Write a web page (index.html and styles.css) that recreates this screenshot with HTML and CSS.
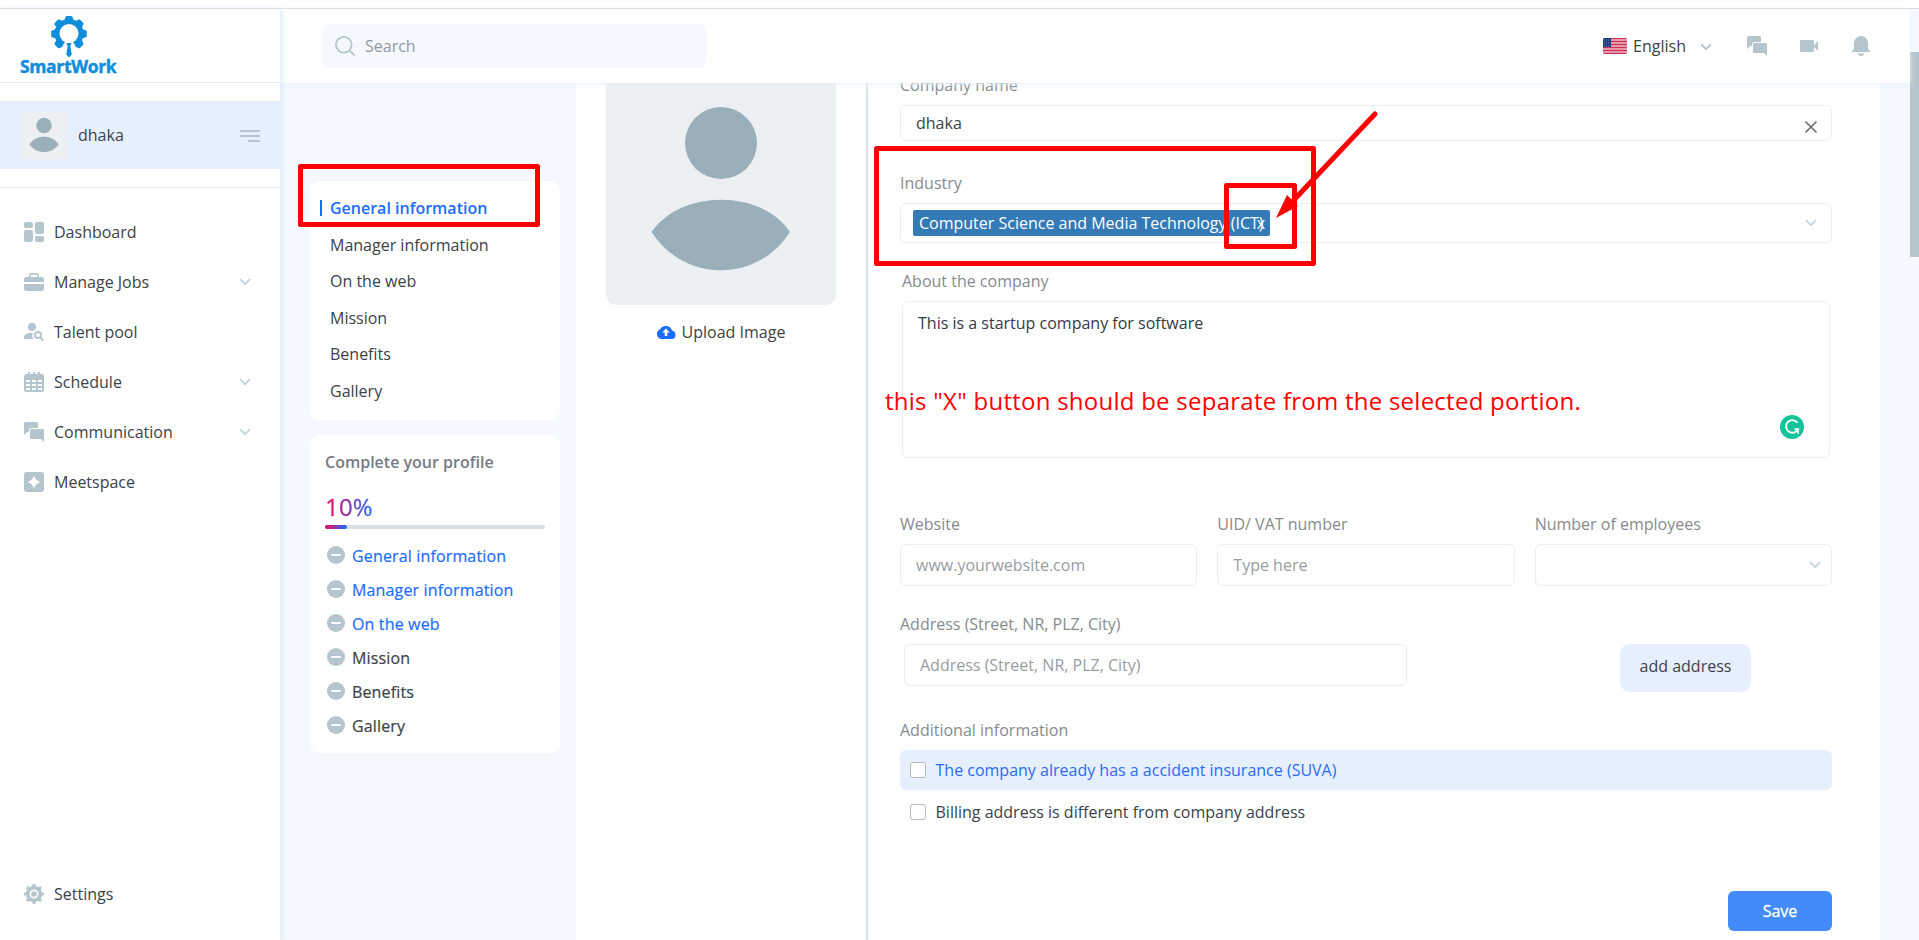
FILE: index.html
```html
<!DOCTYPE html>
<html lang="en">
<head>
<meta charset="utf-8">
<title>SmartWork</title>
<link rel="stylesheet" href="styles.css">
</head>
<body>
<svg class="defs" width="0" height="0">
  <symbol id="chev" viewBox="0 0 12 8"><path d="M1 1.2 6 6.2 11 1.2" fill="none" stroke="currentColor" stroke-width="1.9"/></symbol>
  <symbol id="chat" viewBox="0 0 20 20"><path d="M1.500 0h11A1.500 1.500 0 0 1 14 1.500V6H7.500A2.500 2.500 0 0 0 5 8.500V10H3L0 13V1.500A1.500 1.500 0 0 1 1.500 0z"/><path d="M7.500 7h11A1.500 1.500 0 0 1 20 8.500V20l-3-3H7.500A1.500 1.500 0 0 1 6 15.500v-7A1.500 1.500 0 0 1 7.500 7z"/></symbol>
  <symbol id="minus" viewBox="0 0 18 18"><circle cx="9" cy="9" r="9"/><path d="M5 9h8" stroke="#fff" stroke-width="2" stroke-linecap="round"/></symbol>
  <symbol id="person" viewBox="0 0 230 230"><circle cx="115" cy="68" r="36"/><path d="M45.500 157C75 114 155 114 184 157C152 208 78 208 45.500 157z"/></symbol>
</svg>
<div class="strip"></div>
<div class="app">
  <aside class="sidebar">
    <div class="brand">
      <svg class="gear" width="36" height="42" viewBox="0 0 36 42"><g fill="#108ddb"><circle cx="18" cy="17.500" r="14.500"/><path id="tooth" d="M13 5.500 14.600.8Q15 0 15.800 0h4.400Q21 0 21.400.8L23 5.500z"/><use href="#tooth" transform="rotate(45 18 17.800)"/><use href="#tooth" transform="rotate(90 18 17.800)"/><use href="#tooth" transform="rotate(135 18 17.800)"/><use href="#tooth" transform="rotate(225 18 17.800)"/><use href="#tooth" transform="rotate(270 18 17.800)"/><use href="#tooth" transform="rotate(315 18 17.800)"/></g><circle cx="18" cy="17.500" r="9.500" fill="#fff"/><path d="M14 26h8l1.500 2 2 6h-15l2-6z" fill="#fff"/><path d="M15.500 27h5l-1.200 3 1.400 8.500L18 41.500l-2.700-3L16.700 30z" fill="#108ddb"/></svg>
      <div class="brand-name">SmartWork</div>
    </div>
    <div class="user">
      <svg class="avatar" width="48" height="48" viewBox="0 0 48 48"><circle cx="24" cy="14.500" r="7.700"/><path d="M9.500 33.500C15 23 33 23 38.500 33.500C32 43.500 16 43.500 9.500 33.500z"/></svg>
      <span class="user-name">dhaka</span>
      <svg class="burger" width="20" height="12" viewBox="0 0 20 12"><path d="M0 1h20M0 6h20M8 11h12" stroke="#b4c5ce" stroke-width="2"/></svg>
    </div>
    <nav class="nav">
      <a class="nav-item"><svg width="20" height="20"><rect width="9" height="6" rx="2"/><rect y="8" width="9" height="12" rx="2"/><rect x="11" width="9" height="12" rx="2"/><rect x="11" y="14" width="9" height="6" rx="2"/></svg>Dashboard</a>
      <a class="nav-item"><svg width="20" height="20"><path fill-rule="evenodd" d="M5 5V3a2 2 0 0 1 2-2h6a2 2 0 0 1 2 2v2h3a2 2 0 0 1 2 2v3H0V7a2 2 0 0 1 2-2zM6.500 5h7V2.700h-7zM0 12h20v5a2 2 0 0 1-2 2H2a2 2 0 0 1-2-2z"/></svg>Manage Jobs<svg class="arrow" width="12" height="8"><use href="#chev"/></svg></a>
      <a class="nav-item"><svg width="20" height="20"><circle cx="8" cy="5" r="4"/><path d="M0 17v-2c0-3 4-4.200 9-4-1 2-1 4 .5 6z"/><circle cx="14" cy="13" r="3" fill="none" stroke="#b4c5ce" stroke-width="2"/><path d="m16 15.200 3.300 3.300" stroke="#b4c5ce" stroke-width="2"/></svg>Talent pool</a>
      <a class="nav-item"><svg width="20" height="20"><rect y="2" width="20" height="18" rx="2.500"/><path d="M5 0v4M10 0v4M15 0v4" stroke="#b4c5ce" stroke-width="2"/><path d="M2 9h4M8 9h4M14 9h4M2 13h4M8 13h4M14 13h4M2 17h4M8 17h4M14 17h4" stroke="#fff" stroke-width="2"/></svg>Schedule<svg class="arrow" width="12" height="8"><use href="#chev"/></svg></a>
      <a class="nav-item"><svg width="20" height="20"><use href="#chat"/></svg>Communication<svg class="arrow" width="12" height="8"><use href="#chev"/></svg></a>
      <a class="nav-item"><svg width="20" height="20"><rect width="20" height="20" rx="3"/><path d="M10 3.500Q11.500 8.500 16.500 10 11.500 11.500 10 16.500 8.500 11.500 3.500 10 8.500 8.500 10 3.500z" fill="#fff"/></svg>Meetspace</a>
    </nav>
    <a class="nav-item settings"><svg width="20" height="20" viewBox="0 0 20 20"><circle cx="10" cy="10" r="6.300" fill="none" stroke="#b4c5ce" stroke-width="3.600"/><path d="M10 0v3M10 17v3M0 10h3M17 10h3M3 3l2 2M15 15l2 2M17 3l-2 2M3 17l2-2" stroke="#b4c5ce" stroke-width="3"/><circle cx="10" cy="10" r="2.800"/></svg>Settings</a>
  </aside>

  <div class="main">
    <header class="topbar">
      <div class="search"><svg width="20" height="20" fill="none" stroke="#b4c5ce" stroke-width="1.800"><circle cx="8.800" cy="8.800" r="7.900"/><path d="m14.200 14.200 5.300 5.300"/></svg>Search</div>
      <div class="lang">
        <svg width="24" height="16"><defs><clipPath id="fl"><rect width="24" height="16" rx="2"/></clipPath></defs><g clip-path="url(#fl)"><rect width="24" height="16" fill="#e58a9c"/><path d="M0 .5h24M0 3.500h24M0 6.500h24M0 9.500h24M0 12.500h24M0 15.500h24" stroke="#c9305a"/><path d="M0 2h24M0 5h24M0 8h24M0 11h24M0 14h24" stroke="#eda5b2"/><rect width="8" height="9" fill="#1d3f7c"/><path d="M1 2h6M1 5h6M1 8h6" stroke="#6480ae" stroke-dasharray="1 1"/></g></svg>
        <span>English</span>
        <svg class="lang-chev" width="12" height="8"><use href="#chev"/></svg>
      </div>
      <div class="tools">
        <svg width="20" height="20"><use href="#chat"/></svg>
        <svg width="18" height="12"><rect width="14" height="12" rx="1.200"/><path d="M13.500 6 18 1v10z"/></svg>
        <svg class="bell" width="18" height="20"><path d="M9 0a7 7 0 0 1 7 7v6l2 2v1H0v-1l2-2V7a7 7 0 0 1 7-7zM5.500 17.500h7c-.5 1.500-2 2.500-3.500 2.500s-3-1-3.500-2.500z"/></svg>
      </div>
    </header>

    <div class="content">
      <div class="rail">
        <div class="card menu">
          <a class="active">General information</a><a>Manager information</a><a>On the web</a><a>Mission</a><a>Benefits</a><a>Gallery</a>
        </div>
        <div class="card progress">
          <div class="progress-title">Complete your profile</div>
          <div class="percent">10%</div>
          <div class="bar"><div class="fill" style="width:10%"></div></div>
          <a class="step todo"><svg width="18" height="18"><use href="#minus"/></svg>General information</a>
          <a class="step todo"><svg width="18" height="18"><use href="#minus"/></svg>Manager information</a>
          <a class="step todo"><svg width="18" height="18"><use href="#minus"/></svg>On the web</a>
          <a class="step"><svg width="18" height="18"><use href="#minus"/></svg>Mission</a>
          <a class="step"><svg width="18" height="18"><use href="#minus"/></svg>Benefits</a>
          <a class="step"><svg width="18" height="18"><use href="#minus"/></svg>Gallery</a>
        </div>
      </div>
      <div class="panel">
        <div class="photo-col">
          <div class="photo"><svg width="230" height="230"><use href="#person"/></svg></div>
          <div class="upload"><svg width="20" height="14"><path d="M5 14a5 5 0 0 1-1-9.500 6.500 6.500 0 0 1 12 1A4.300 4.300 0 0 1 15.700 14z" fill="#1a6dff"/><path d="M10 3.500 13.800 7.500H11.300V11H8.700V7.500H6.200z" fill="#fff"/></svg>Upload Image</div>
        </div>
        <div class="form">
          <label class="lbl">Company name</label>
          <div class="field name"><span>dhaka</span><svg width="12" height="12"><path d="m.5.5 11 11m0-11-11 11" stroke="#777" stroke-width="1.600"/></svg></div>
          <label class="lbl industry-lbl">Industry</label>
          <div class="field industry"><span class="tag">Computer Science and Media Technology (ICT)<b class="tag-x">x</b></span><svg width="12" height="8"><use href="#chev"/></svg></div>
          <div class="about">
            <label class="lbl">About the company</label>
            <div class="area">This is a startup company for software
              <svg class="gram" width="24" height="24"><circle cx="12" cy="12" r="12" fill="#15c39a"/><path d="M17.500 7.800A6.300 6.300 0 1 0 18 14.200H14.500M18 18.800V14.200" fill="none" stroke="#fff" stroke-width="1.800"/></svg>
            </div>
          </div>
          <div class="three">
            <div><label class="lbl">Website</label><div class="field ph">www.yourwebsite.com</div></div>
            <div><label class="lbl">UID/ VAT number</label><div class="field ph">Type here</div></div>
            <div><label class="lbl">Number of employees</label><div class="field select"><svg width="12" height="8"><use href="#chev"/></svg></div></div>
          </div>
          <label class="lbl addr-lbl">Address (Street, NR, PLZ, City)</label>
          <div class="addr"><div class="field ph">Address (Street, NR, PLZ, City)</div><div class="add">add address</div></div>
          <label class="lbl info-lbl">Additional information</label>
          <div class="check blue"><i></i>The company already has a accident insurance (SUVA)</div>
          <div class="check"><i></i>Billing address is different from company address</div>
          <div class="save">Save</div>
        </div>
      </div>
    </div>
  </div>
  <div class="scroll"><div class="thumb"></div></div>
</div>

<svg class="marks" width="1919" height="940">
  <g fill="none" stroke="#f00" stroke-width="5" stroke-linejoin="round"><rect x="300.500" y="166.500" width="237" height="58"/><rect x="876.500" y="148.500" width="437" height="115"/><rect x="1226.500" y="185.500" width="68" height="61"/><path d="M1375 114 1292 202" stroke-linecap="round"/></g>
  <path d="M1276 218 1287 195 1298 206 Z" fill="#f00"/>
</svg>
<div class="remark">this "X" button should be separate from the selected portion.</div>
</body>
</html>
```
FILE: styles.css
```css
* { box-sizing: border-box; }
body { margin: 0; width: 1919px; height: 940px; overflow: hidden; background: #fff; font: 16px/24px "Open Sans", "Noto Sans", sans-serif; color: #3c4248; position: relative; }
svg { display: block; flex: none; }
.defs { position: absolute; }
.strip { height: 9px; border-bottom: 1px solid #d9d9d9; }
.app { display: flex; height: 931px; }

.sidebar { width: 280px; display: flex; flex-direction: column; background: #fff; box-shadow: 2px 0 6px #d8ecf9; z-index: 3; }
.brand { height: 74px; border-bottom: 1px solid #ebebeb; padding: 7px 0 0 20px; width: 280px; }
.gear { margin-left: 31px; }
.brand-name { width: 97px; margin-top: -2px; font: 700 17.500px/20px "Open Sans", sans-serif; letter-spacing: -.35px; color: #108ddb; -webkit-text-stroke: .4px #108ddb; white-space: nowrap; }
.user { height: 68px; margin-top: 18px; padding: 0 20px; background: #e6effe; display: flex; align-items: center; }
.avatar { background: #ecf0f3; border-radius: 6px; fill: #9aafba; }
.user-name { margin-left: 10px; flex: 1; }
.burger { margin-top: 2px; }
.nav { margin-top: 18px; border-top: 1px solid #ebebeb; padding-top: 19px; }
.nav-item { display: flex; align-items: center; height: 50px; padding: 0 29px 0 24px; gap: 10px; fill: #b4c5ce; color: #3c4248; }
.arrow { margin-left: auto; color: #c5d3da; }
.settings { margin-top: auto; margin-bottom: 21px; }

.main { width: 1630px; display: flex; flex-direction: column; }
.topbar { height: 74px; display: flex; align-items: center; padding: 0 40px 0 43px; background: #fff; box-shadow: 0 1px 5px #e2f2fb; z-index: 2; }
.search { width: 383px; height: 44px; background: #f5f8ff; border-radius: 6px; padding-left: 12px; display: flex; align-items: center; gap: 10px; color: #93999e; }
.lang { margin-left: auto; display: flex; align-items: center; gap: 6px; }
.lang-chev { margin: 2px 0 0 8px; color: #b4c5ce; }
.tools { display: flex; align-items: center; gap: 33px; margin-left: 35px; fill: #b4c5ce; }
.bell { margin-left: 1px; }

.content { flex: 1; display: flex; background: #f5f8ff; }
.rail { width: 296px; padding: 98px 16px 0 30px; }
.card { background: #fff; border-radius: 10px; }
.menu { height: 239px; padding: 9px 20px; display: flex; flex-direction: column; color: #3c4248; }
.menu a { line-height: 36.600px; height: 36.600px; }
.menu .active { font-weight: 600; color: #1a6dff; display: flex; align-items: center; margin-left: -10px; }
.active::before { content: ""; width: 2px; height: 16px; background: #1a6dff; margin-right: 8px; }
.progress { height: 318px; margin-top: 15px; padding: 15px 15px 0; }
.progress-title { font-weight: 600; color: #787c82; }
.percent { width: 48px; margin-top: 17px; font-size: 24px; -webkit-text-stroke: .3px transparent; line-height: 32px; letter-spacing: .2px; background: linear-gradient(90deg, #f50a5c, #1a6dff); -webkit-background-clip: text; background-clip: text; color: transparent; }
.bar { height: 4px; margin: 2px 0 10px; border-radius: 2px; background: #d9e1e7; }
.fill { height: 4px; border-radius: 2px; background: linear-gradient(90deg, #f50a5c, #1a6dff); }
.step { display: flex; align-items: center; height: 34px; gap: 7px; padding-left: 2px; letter-spacing: .15px; -webkit-text-stroke: .2px currentColor; }
.step svg { fill: #b4c5ce; margin-top: -2px; }
.todo { color: #1a6dff; }

.panel { width: 1304px; background: #fff; display: flex; }
.photo-col { width: 292px; padding-left: 30px; border-right: 2px solid #dae2e7; }
.photo { width: 230px; height: 230px; margin-top: -8px; background: #ecf0f3; border-radius: 10px; fill: #9aafba; }
.upload { display: flex; align-items: center; justify-content: center; gap: 5.500px; width: 229.500px; margin-top: 15px; }
.form { width: 964px; padding-left: 32px; margin-top: -10px; }
.lbl { display: block; color: #868b90; line-height: 24px; height: 24px; }
.field { height: 42px; border: 1px solid #eceef0; border-radius: 6px; display: flex; align-items: center; padding: 0 15px; color: #3c4248; }
.name { height: 36px; margin-top: 8px; justify-content: space-between; padding-right: 14px; }
.name svg { margin-top: 8px; }
.industry-lbl { margin-top: 30px; }
.industry { height: 40px; margin-top: 8px; padding: 0 14px 0 12px; justify-content: space-between; color: #c5d3da; }
.tag { position: relative; width: 357px; height: 26px; padding-left: 6px; border-radius: 2px; background: #337ab7; color: #fff; line-height: 26px; white-space: nowrap; }
.tag-x { position: absolute; right: 5px; top: 0; font-weight: 400; }
.about { margin: 26px 2px 0; }
.area { position: relative; height: 157px; margin-top: 8px; padding: 9px 15px; border: 1px solid #eceef0; border-radius: 6px; color: #333b46; }
.gram { position: absolute; right: 25px; bottom: 18px; }
.three { display: grid; grid-template-columns: repeat(3, 1fr); gap: 20px; margin-top: 54px; }
.three .field { margin-top: 8px; }
.ph { color: #989da1; }
.select { justify-content: flex-end; padding-right: 10px; color: #c5d3da; }
.addr-lbl { margin-top: 26px; }
.addr { display: flex; margin: 8px 0 0 4px; }
.addr .field { width: 503px; }
.add { width: 131px; height: 48px; margin-left: 213px; border-radius: 10px; background: #e6effe; text-align: center; line-height: 44px; }
.info-lbl { margin-top: 26px; }
.check { display: flex; align-items: center; height: 40px; padding-left: 10px; margin-top: 2px; gap: 9.500px; }
.check i { width: 16px; height: 16px; border: 1px solid #b9b9b9; border-radius: 3px; background: #fff; }
.blue { margin-top: 8px; background: #e6effe; color: #2b6cf5; border-radius: 6px; }
.save { width: 104px; height: 40px; margin: 59px 0 0 auto; border-radius: 6px; background: #428bf9; color: #fff; -webkit-text-stroke: .3px #fff; text-align: center; line-height: 40px; }

.scroll { width: 9px; background: #f5f8ff; padding-top: 43px; }
.thumb { height: 205px; background: #b4c5ce; }
.marks { position: absolute; left: 0; top: 0; z-index: 5; }
.remark { position: absolute; left: 885px; top: 385px; z-index: 5; font: 24px/32px "Open Sans", "Noto Sans", sans-serif; letter-spacing: .25px; color: #f00; white-space: nowrap; }
```
